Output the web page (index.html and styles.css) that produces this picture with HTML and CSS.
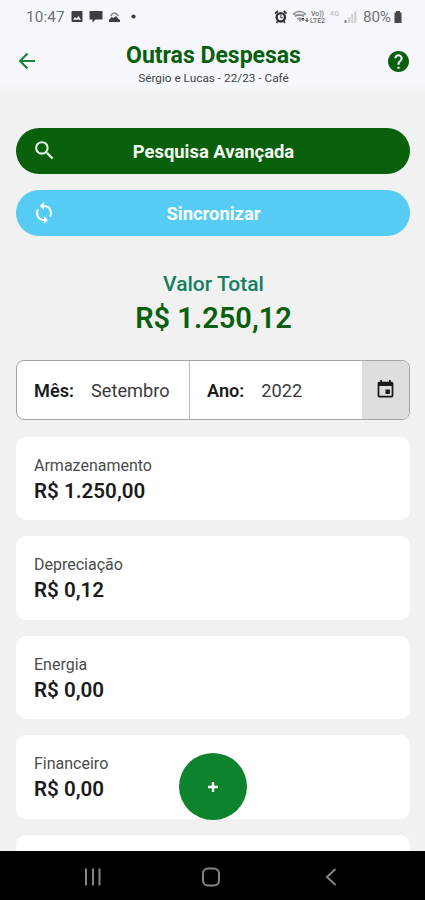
FILE: index.html
```html
<!DOCTYPE html>
<html lang="pt-BR">
<head>
<meta charset="utf-8">
<meta name="viewport" content="width=device-width, initial-scale=1">
<title>Outras Despesas</title>
<link rel="stylesheet" href="styles.css">
</head>
<body>
<div class="screen">
  <header class="top">
    <div class="status">
      <span class="clock">10:47</span>
      <svg class="notifications" viewBox="0 0 68 14" width="68" height="14" fill="#3b3e42">
        <path fill-rule="evenodd" d="M1.500 1h9q1 0 1 1v9q0 1-1 1h-9q-1 0-1-1V2q0-1 1-1zM2 9.700h8L7.500 6 5.500 8.500 4 7z"/>
        <path d="M18.500 1h13v8.500h-7L21.500 12.500v-3h-3z"/>
        <path d="M38 12v-2l2.500-3 2 1L45 6l2.500 3 1.500 1v2z"/><path d="M39.500 6q4-6 8 0" stroke="#85888c" fill="none" stroke-width="1.500"/>
        <circle cx="62.500" cy="6.500" r="2.100"/>
      </svg>
      <svg class="radio" viewBox="0 0 86 16" width="86" height="16">
        <g fill="none" stroke="#303336"><circle cx="6.800" cy="8.300" r="4.200" stroke-width="2.400"/><path d="M1 4.500l3-2.500M9.600 2l3 2.500M2.500 14l1.500-2M11 14l-1.500-2" stroke-width="1.700"/><path d="M6.800 5.500v3.300h2.400"/></g>
        <g fill="none" stroke="#8a8c8f" stroke-width="1.300"><path d="M19 5q6.500-5 13 0M21 7.500q4.500-3.500 9 0M23 10q2.500-1.800 5 0M19 5q6.500 3 13 0"/></g>
        <path d="M24 10.500h4l-2 2.500z" fill="#8a8c8f"/><path d="M29 12V9m-1.500 1.500L29 9l1.500 1.500M33 9v3.500m-1.500-1.500l1.500 1.500 1.500-1.500" stroke="#333" fill="none"/>
        <g class="tiny"><text x="37" y="7" textLength="13" lengthAdjust="spacingAndGlyphs">Vo))</text><text x="36" y="14" textLength="15" lengthAdjust="spacingAndGlyphs">LTE2</text><text x="56" y="7" class="pale" textLength="9">4G</text></g>
        <g fill="#cfd1d4"><path d="M74 8h2.200v6H74zM77.200 5h2v9h-2zM80.200 2.500h2.200V14h-2.200z"/><path d="M70.500 11h2v3h-2z" fill="#888"/></g>
      </svg>
      <span class="percent">80%</span>
      <svg class="battery" viewBox="0 0 10 13" width="10" height="13"><path d="M3 0h4v1.500h1.500V12h-7V1.500H3z" fill="#45474a"/></svg>
    </div>
    <div class="appbar">
      <svg class="back" viewBox="0 0 18 18" width="18" height="18" fill="none" stroke="#168336" stroke-width="2"><path d="M17 9H2M9.500 1.500L2 9l7.500 7.500"/></svg>
      <div class="heading">
        <h1>Outras Despesas</h1>
        <p>Sérgio e Lucas - 22/23 - Café</p>
      </div>
      <svg class="help" viewBox="2 2 20 20" width="21" height="21" fill="#08600d"><path d="M12 2C6.480 2 2 6.480 2 12s4.480 10 10 10 10-4.480 10-10S17.520 2 12 2zm1 17h-2v-2h2v2zm2.070-7.750l-.9.920C13.450 12.900 13 13.500 13 15h-2v-.5c0-1.100.450-2.100 1.170-2.830l1.240-1.260c.370-.360.590-.860.590-1.410 0-1.100-.9-2-2-2s-2 .9-2 2H8c0-2.210 1.790-4 4-4s4 1.790 4 4c0 .880-.360 1.680-.930 2.250z"/></svg>
    </div>
  </header>

  <main>
    <button class="action search">
      <svg viewBox="0 0 24 24" width="25" height="25" fill="#e9f3e7"><path d="M15.500 14h-.790l-.280-.270A6.470 6.470 0 0 0 16 9.500 6.500 6.500 0 1 0 9.500 16c1.610 0 3.090-.590 4.230-1.570l.270.280v.790l5 4.990L20.490 19l-4.990-5zm-6 0C7.010 14 5 11.990 5 9.500S7.010 5 9.500 5 14 7.010 14 9.500 11.990 14 9.500 14z"/></svg>
      <span>Pesquisa Avançada</span>
    </button>
    <button class="action sync">
      <svg viewBox="0 0 24 24" width="24" height="24" fill="#fff"><path d="M12 4V1L8 5l4 4V6c3.310 0 6 2.690 6 6 0 1.010-.250 1.970-.7 2.800l1.460 1.460A7.930 7.930 0 0 0 20 12c0-4.420-3.580-8-8-8zm0 14c-3.310 0-6-2.690-6-6 0-1.010.250-1.970.7-2.800L5.240 7.740A7.930 7.930 0 0 0 4 12c0 4.420 3.580 8 8 8v3l4-4-4-4v3z"/></svg>
      <span>Sincronizar</span>
    </button>

    <section class="total">
      <h2>Valor Total</h2>
      <strong>R$ 1.250,12</strong>
    </section>

    <div class="period">
      <div class="field month"><b>Mês:</b><span>Setembro</span></div>
      <div class="field year"><b>Ano:</b><span>2022</span></div>
      <div class="calendar"><svg viewBox="0 0 24 24" width="21" height="21" fill="#191919"><path d="M17 12h-5v5h5v-5zM16 1v2H8V1H6v2H5c-1.110 0-1.990.9-1.990 2L3 19a2 2 0 0 0 2 2h14c1.100 0 2-.9 2-2V5c0-1.100-.9-2-2-2h-1V1h-2zm3 18H5V8h14v11z"/></svg></div>
    </div>

    <div class="list">
      <article class="card"><span>Armazenamento</span><strong>R$ 1.250,00</strong></article>
      <article class="card"><span>Depreciação</span><strong>R$ 0,12</strong></article>
      <article class="card"><span>Energia</span><strong>R$ 0,00</strong></article>
      <article class="card"><span>Financeiro</span><strong>R$ 0,00</strong></article>
      <article class="card"></article>
    </div>
  </main>
  <button class="add" aria-label="Adicionar"><svg viewBox="0 0 12 12" width="12" height="12"><path d="M6 1v10M1 6h10" stroke="#fff" stroke-width="2.400"/></svg></button>

  <nav>
    <svg viewBox="0 0 18 20" width="18" height="20" stroke="#858585" stroke-width="2"><path d="M2 1.500v17M9 1.500v17M15.500 1.500v17"/></svg>
    <svg class="home" viewBox="0 0 20 20" width="20" height="20" fill="none" stroke="#858585" stroke-width="2"><rect x="2" y="1.500" width="16" height="17" rx="5"/></svg>
    <svg viewBox="0 0 12 18" width="12" height="18" fill="none" stroke="#858585" stroke-width="2"><path d="M10.500 1L2 9l8.500 8"/></svg>
  </nav>
</div>
</body>
</html>
```
FILE: styles.css
```css
* { box-sizing: border-box; }
body { margin: 0; font-family: Roboto, sans-serif; color: #1b1b1b; }
h1, h2, p { margin: 0; }
button { border: 0; padding: 0; font-family: inherit; }
svg { display: block; flex: none; }

.screen { position: relative; width: 425px; height: 900px; overflow: hidden; display: flex; flex-direction: column; background: #f1f1f1; }
.top { height: 91px; flex: none; background: linear-gradient(#f6f7fc 94%, #f1f1f1); }
.status { display: flex; align-items: center; height: 33px; padding: 0 22px 0 26px; color: #707275; }
.clock { width: 45px; font-size: 15.300px; letter-spacing: .1px; }
.radio { margin-left: auto; }
.tiny { font-size: 7px; font-weight: 500; fill: #707275; }
.tiny .pale { fill: #bbbdc1; }
.percent { width: 30px; margin-left: 3px; font-size: 15.300px; letter-spacing: -.2px; }
.battery { position: relative; top: 1px; }
.appbar { display: flex; justify-content: space-between; height: 58px; padding: 0 16px 0 18px; }
.back { margin-top: 19px; }
.help { margin-top: 18px; }
.heading { text-align: center; padding: 9px 0 0 3px; }
h1 { color: #08600d; font-size: 23px; font-weight: 700; line-height: 28px; white-space: nowrap; }
.heading p { font-size: 11.800px; line-height: 14px; margin-top: 1px; color: #424446; }

main { flex: 1; min-height: 0; overflow: hidden; padding: 37px 15px 0 16px; }
.action { position: relative; display: flex; align-items: center; justify-content: center; width: 100%; height: 45.500px; border-radius: 23px; color: #f4faf3; font-size: 18.400px; font-weight: 700; }
.action svg { position: absolute; left: 16px; }
.action span { padding: 2px 0 0 1px; }
.search { background: #08600a; }
.sync { margin-top: 16.500px; background: #56cbf3; color: #fff; }
.total { display: flex; flex-direction: column; align-items: center; padding: 36px 0 0 1px; }
h2 { font-size: 21px; font-weight: 500; line-height: 25px; color: #148060; }
.total strong { font-size: 29px; font-weight: 600; line-height: 42px; color: #08600d; }

.period { display: flex; height: 59.500px; margin-top: 21.500px; border: 1px solid #a5a5a5; border-radius: 8px; overflow: hidden; background: #fff; font-size: 18.200px; }
.field { display: flex; align-items: center; gap: 17px; padding: 1px 0 0 17px; }
.field b { font-weight: 600; }
.field span { color: #3b3b3b; }
.month { width: 173px; border-right: 1px solid #bcbcbc; }
.year { flex: 1; }
.calendar { width: 47px; display: flex; align-items: center; justify-content: center; background: #dedede; }

.list { display: flex; flex-direction: column; gap: 16px; padding-top: 17px; }
.card { flex: none; height: 83.500px; padding: 18px 18px 0; border-radius: 10px; background: #fff; }
.card span, .card strong { display: block; }
.card span { font-size: 16px; line-height: 22px; color: #4b4b4b; }
.card strong { font-size: 20.600px; line-height: 28px; font-weight: 600; }

.add { position: absolute; left: 179px; top: 753px; width: 68px; height: 67px; border-radius: 50%; display: flex; align-items: center; justify-content: center; background: #0c832c; }
.add svg { margin-top: 1px; }
nav { flex: none; height: 49px; padding: 2px 88px 0 84px; display: flex; align-items: center; justify-content: space-between; background: #000; }
.home { margin-right: 5px; }
```
